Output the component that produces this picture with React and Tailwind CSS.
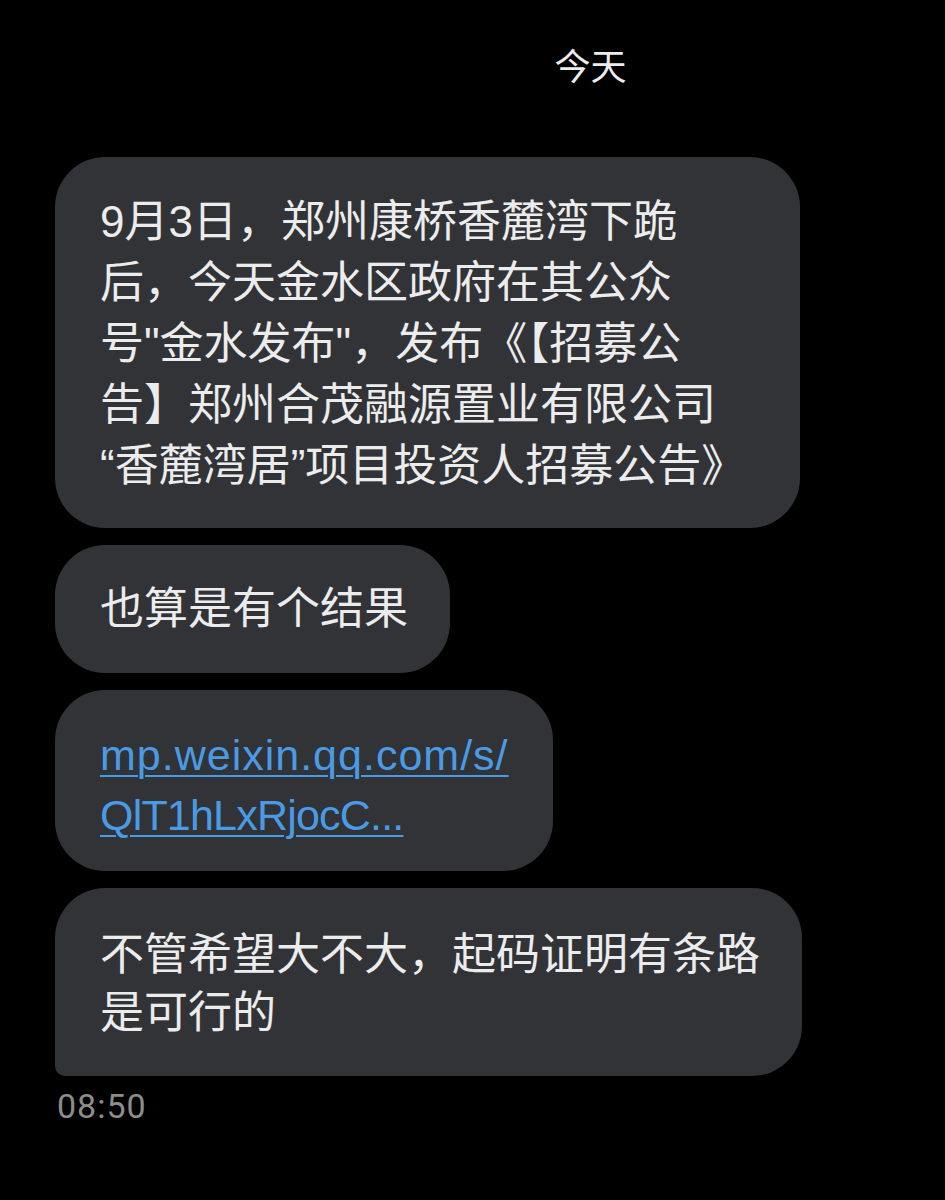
export default function App() {
  const font = { fontFamily: '"Liberation Sans", "Noto Sans CJK SC", sans-serif' };
  return (
    <div className="w-[945px] h-[1200px] bg-black overflow-hidden" style={font}>
      <div className="pt-[46px] pl-[236px] flex justify-center">
        <span className="text-[36px] leading-[44px] text-[#ececec]">今天</span>
      </div>
      <div className="pl-[55px] pt-[67px] flex flex-col items-start gap-[17px]">
        <div className="w-[745px] bg-[#313337] rounded-[50px] pl-[45px] pt-[34px] pb-[32px] text-[44px] leading-[61px] text-[#ececec] whitespace-nowrap">
          9月3日，郑州康桥香麓湾下跪<br />
          后，今天金水区政府在其公众<br />
          号"金水发布"，发布《【招募公<br />
          告】郑州合茂融源置业有限公司<br />
          “香麓湾居”项目投资人招募公告》
        </div>
        <div className="w-[395px] bg-[#313337] rounded-[50px] pl-[45px] py-[34px] text-[44px] leading-[60px] text-[#ececec] whitespace-nowrap">
          也算是有个结果
        </div>
        <div className="w-[498px] bg-[#313337] rounded-[50px] pl-[45px] pt-[35px] pb-[26px] text-[43px] leading-[60px] text-[#4a9be6] whitespace-nowrap">
          <span className="underline decoration-2 underline-offset-[5px] tracking-[1px]">mp.weixin.qq.com/s/</span><br />
          <span className="underline decoration-2 underline-offset-[5px] tracking-[-0.8px]">QlT1hLxRjocC...</span>
        </div>
        <div className="w-[747px] bg-[#313337] rounded-[50px] rounded-bl-[10px] pl-[45px] pt-[38px] pb-[34px] text-[44px] leading-[58px] text-[#ececec] whitespace-nowrap">
          不管希望大不大，起码证明有条路<br />
          是可行的
        </div>
        <div className="-mt-[7px] pl-[2px] text-[34px] leading-[40px] tracking-[1px] text-[#8c8c8c]" style={{ fontFamily: 'Roboto, "Liberation Sans", sans-serif' }}>
          08:50
        </div>
      </div>
    </div>
  );
}
